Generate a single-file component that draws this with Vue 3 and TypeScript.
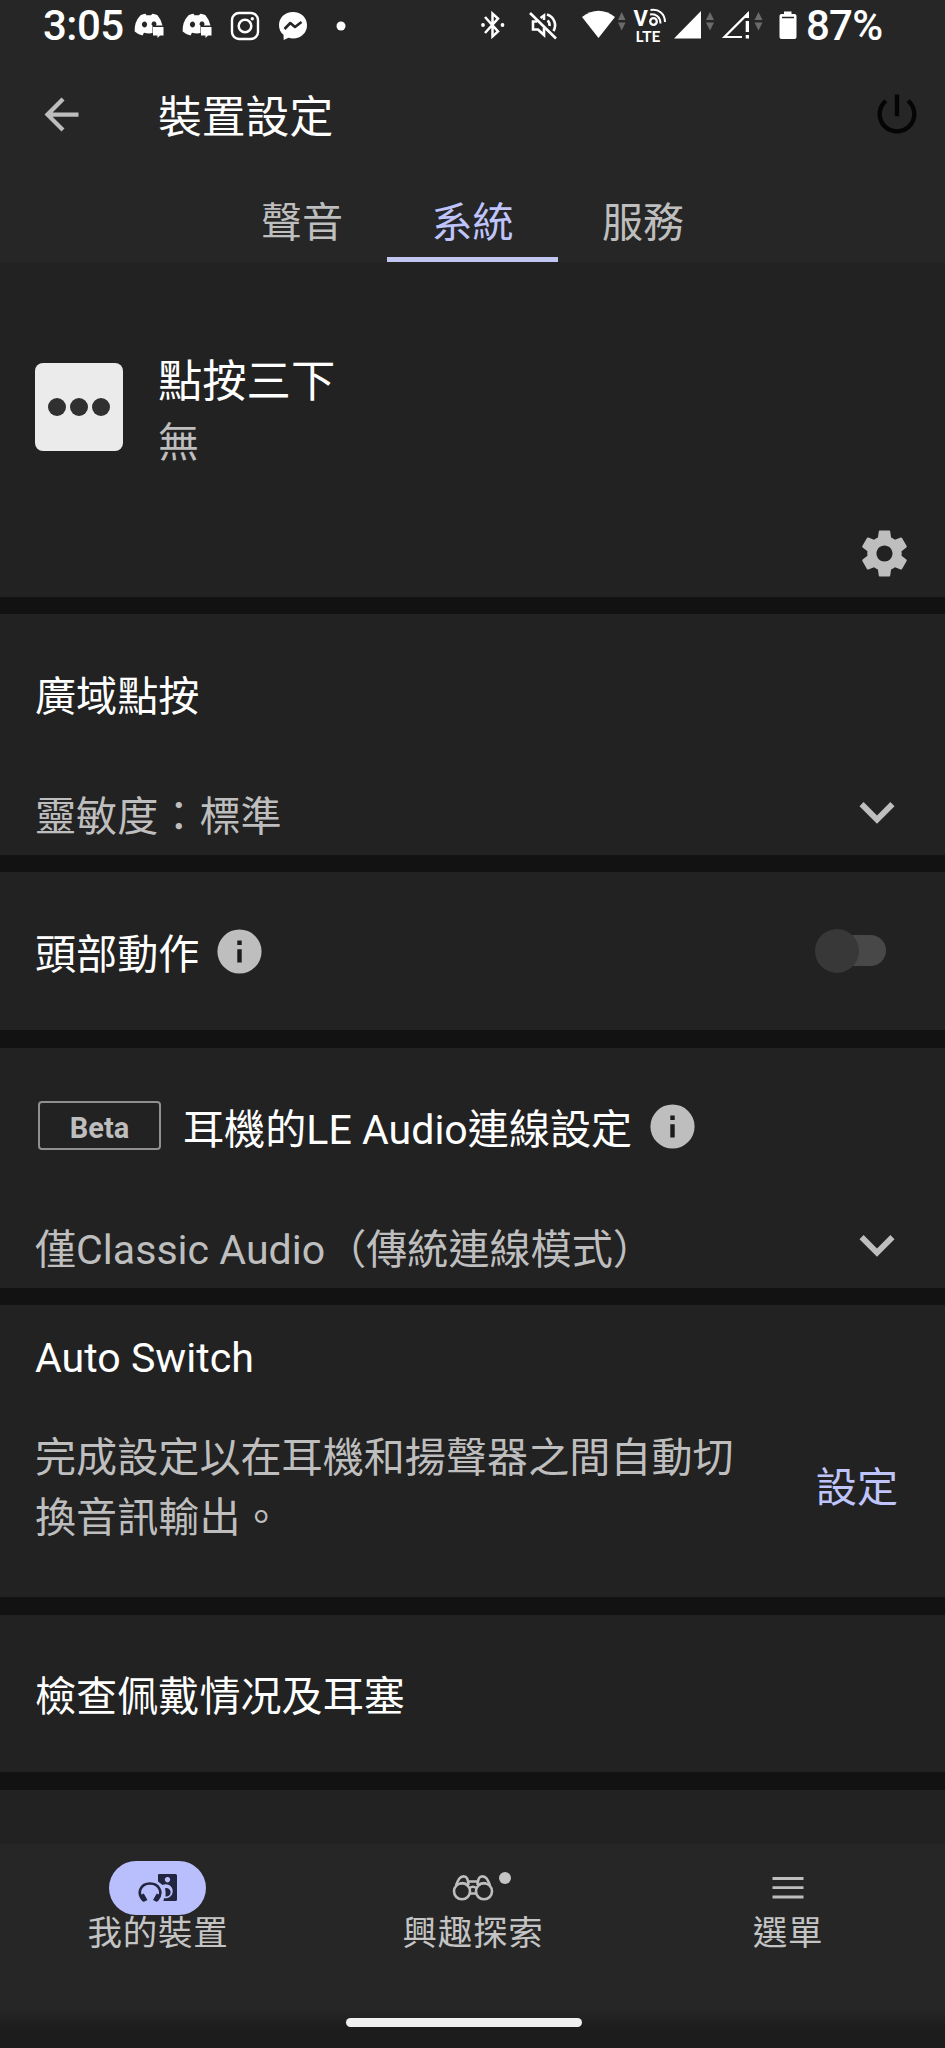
<script setup lang="ts">
import { ref } from 'vue'

interface Tab {
  id: string
  label: string
}

const tabs: Tab[] = [
  { id: 'sound', label: '聲音' },
  { id: 'system', label: '系統' },
  { id: 'service', label: '服務' },
]
const activeTab = ref<string>('system')
const headGesture = ref<boolean>(false)
</script>

<template>
  <div class="screen">
    <header class="top">
      <div class="status">
        <span class="clock">3:05</span>
        <div class="notifs">
          <svg v-for="n in 2" :key="n" width="30" height="26" viewBox="0 0 30 26">
            <path fill="#fff" fill-rule="evenodd" d="M6.500 2.200Q9 1 11.500.700L12.500 2.200H17L18.300.700Q21 1 23.500 2.200Q27.500 7 28.500 12.500H18.500V20Q15 21 10 19.800L8.500 22.500Q4 21.500.700 18.500Q0 9 6.500 2.200ZM10.500 8.500a2.600 3 0 1 0 .01 0ZM19.800 8.500a2.300 2.500 0 0 0-1.800 4H22a2.300 2.500 0 0 0-2.200-4Z" />
            <path fill="#fff" d="M19 14H29.500V22.500H26L23.500 25V22.500H19Z" />
          </svg>
          <svg width="30" height="30" viewBox="0 0 30 30" fill="none" stroke="#fff">
            <rect x="2" y="2" width="26" height="26" rx="7" stroke-width="2.400" />
            <circle cx="15" cy="15" r="6.300" stroke-width="2.500" />
            <circle cx="22.300" cy="7.700" r="1.700" fill="#fff" stroke="none" />
          </svg>
          <svg width="30" height="30" viewBox="0 0 30 30">
            <path fill="#fff" d="M15 1C6.800 1 1 6.800 1 14.200c0 4 1.700 7.300 4.500 9.600L5.700 29l4.800-2.200c1.400.4 2.900.6 4.500.6 8.200 0 14-5.800 14-13.200S23.200 1 15 1Z" />
            <path fill="none" stroke="#262626" stroke-width="2.600" stroke-linejoin="round" d="M6.500 18 12.300 12 17 16 23.500 11" />
          </svg>
          <svg width="10" height="10" viewBox="0 0 10 10"><circle cx="5" cy="5" r="4.500" fill="#fff" /></svg>
        </div>
        <div class="system-icons">
          <svg class="bt" width="26" height="36" viewBox="480 8 26 36">
            <path d="M485 17 498 31.500 492.500 36.500V13.500L498 18.500 485 33" fill="none" stroke="#fff" stroke-width="2.500" />
            <circle cx="483" cy="25" r="1.900" fill="#fff" /><circle cx="502.500" cy="25" r="1.900" fill="#fff" />
          </svg>
          <svg class="mute" width="30" height="36" viewBox="528 8 30 36" fill="none" stroke="#fff" stroke-width="2.600">
            <path d="M530 13 556 38.500" />
            <path d="M537 21.500H533V29.500H538L544 35V28M540.500 18 544 15.500V20" />
            <path d="M547 14.500C554.500 17 557 25 553.500 31M547.500 20.500Q550 22.500 549.500 26" />
          </svg>
          <svg class="wifi" width="44" height="36" viewBox="582 8 44 36">
            <path fill="#fff" d="M582 17Q598.500 4.500 615 17L598.500 38Z" />
            <path fill="#6b6b6b" d="M618 20 621.700 12 625.500 20ZM618 22.500H625.500L621.700 30.500Z" />
          </svg>
          <svg class="volte" width="34" height="36" viewBox="633 8 34 36">
            <text x="633.500" y="25.500" class="vo">V</text>
            <circle cx="653.500" cy="21.500" r="3.300" fill="none" stroke="#fff" stroke-width="2.300" />
            <path d="M650 14.500C656 13.500 660.500 17 660.500 23.500M650.500 10C659 8.500 665 14 665 22" fill="none" stroke="#fff" stroke-width="2" />
            <text x="635.500" y="41.500" class="lte">LTE</text>
          </svg>
          <svg class="sig" width="41" height="36" viewBox="674 8 41 36">
            <path fill="#fff" d="M674 38.500 701 11V38.500Z" />
            <path fill="#6b6b6b" d="M706 20 710 12 714 20ZM706 22.500H714L710 30.500Z" />
          </svg>
          <svg class="sig2" width="43" height="36" viewBox="720 8 43 36">
            <path fill="none" stroke="#fff" stroke-width="2.200" d="M742 37H724.500L747.500 14V18" />
            <path fill="#fff" d="M743 18 749 11V18ZM745.700 21H749V32H745.700ZM745.700 35H749V38.500H745.700Z" />
            <path fill="#6b6b6b" d="M754.500 20 758.500 12 762.500 20ZM754.500 22.500H762.500L758.500 30.500Z" />
          </svg>
          <svg class="batt" width="18" height="36" viewBox="779 8 18 36">
            <path fill="#fff" d="M784 14V11.500H791.500V14H794.500Q796.500 14 796.500 16V37Q796.500 39 794.500 39H781.500Q779.500 39 779.500 37V16Q779.500 14 781.500 14Z" />
            <path d="M782 17.500H794" stroke="#262626" stroke-width="1.500" />
          </svg>
        </div>
        <span class="percent">87%</span>
      </div>

      <div class="toolbar">
        <svg class="back" width="51" height="51" viewBox="0 0 24 24"><path fill="#bdbdbd" d="M20 11H7.830l5.590-5.590L12 4l-8 8 8 8 1.410-1.410L7.830 13H20v-2z" /></svg>
        <h1>裝置設定</h1>
        <svg class="power" width="52" height="52" viewBox="0 0 24 24"><path fill="#050505" d="M13 3h-2v10h2V3zm4.830 2.170l-1.420 1.420C17.990 7.860 19 9.810 19 12c0 3.870-3.130 7-7 7s-7-3.130-7-7c0-2.190 1.010-4.140 2.580-5.420L6.170 5.170C4.230 6.820 3 9.260 3 12c0 4.970 4.030 9 9 9s9-4.030 9-9c0-2.740-1.230-5.180-3.170-6.830z" /></svg>
      </div>

      <nav class="tabs">
        <button v-for="tab in tabs" :key="tab.id" :class="['tab', { active: tab.id === activeTab }]" @click="activeTab = tab.id">{{ tab.label }}</button>
      </nav>
    </header>

    <main class="list">
      <section class="tap">
        <div class="tap-row">
          <div class="tile"><i></i><i></i><i></i></div>
          <div>
            <div class="big">點按三下</div>
            <div class="line muted">無</div>
          </div>
        </div>
        <svg class="gear" width="55" height="55" viewBox="0 0 24 24"><path fill="#bebebe" d="M19.430 12.980c.04-.32.070-.64.070-.98s-.03-.66-.07-.98l2.110-1.650c.19-.15.24-.42.12-.64l-2-3.460c-.12-.22-.39-.3-.61-.22l-2.490 1c-.52-.4-1.080-.73-1.690-.98l-.38-2.650C14.460 2.180 14.250 2 14 2h-4c-.25 0-.46.18-.49.42l-.38 2.650c-.61.25-1.170.59-1.690.98l-2.490-1c-.23-.09-.49 0-.61.22l-2 3.460c-.13.22-.07.49.12.64l2.110 1.650c-.04.32-.07.65-.07.98s.03.66.07.98l-2.110 1.650c-.19.15-.24.42-.12.64l2 3.460c.12.22.39.3.61.22l2.490-1c.52.4 1.080.73 1.690.98l.38 2.650c.03.24.24.42.49.42h4c.25 0 .46-.18.49-.42l.38-2.650c.61-.25 1.170-.59 1.690-.98l2.490 1c.23.09.49 0 .61-.22l2-3.460c.12-.22.07-.49-.12-.64l-2.110-1.650zM12 15.500c-1.930 0-3.500-1.570-3.500-3.500s1.570-3.500 3.500-3.500 3.500 1.570 3.500 3.500-1.570 3.500-3.500 3.500z" /></svg>
      </section>

      <section class="expand">
        <div class="line">廣域點按</div>
        <div class="value-row">
          <span class="line muted">靈敏度：標準</span>
          <svg class="chevron" width="70" height="70" viewBox="0 0 24 24"><path fill="#bebebe" d="M16.590 8.590 12 13.170 7.410 8.590 6 10l6 6 6-6z" /></svg>
        </div>
      </section>

      <section class="switch-row">
        <span class="line">頭部動作</span>
        <svg class="info" width="53" height="53" viewBox="0 0 24 24"><circle cx="12" cy="12" r="10" fill="#bebebe" /><path fill="#1c1c1c" d="M11 7h2v2h-2zM11 11h2v6h-2z" /></svg>
        <button :class="['toggle', { on: headGesture }]" aria-label="頭部動作" @click="headGesture = !headGesture"><span class="track"></span><span class="thumb"></span></button>
      </section>

      <section class="expand">
        <div class="beta-row">
          <span class="beta">Beta</span>
          <span class="line">耳機的LE Audio連線設定</span>
          <svg class="info" width="53" height="53" viewBox="0 0 24 24"><circle cx="12" cy="12" r="10" fill="#bebebe" /><path fill="#1c1c1c" d="M11 7h2v2h-2zM11 11h2v6h-2z" /></svg>
        </div>
        <div class="value-row">
          <span class="line muted">僅Classic Audio（傳統連線模式）</span>
          <svg class="chevron" width="70" height="70" viewBox="0 0 24 24"><path fill="#bebebe" d="M16.590 8.590 12 13.170 7.410 8.590 6 10l6 6 6-6z" /></svg>
        </div>
      </section>

      <section class="auto">
        <div class="line">Auto Switch</div>
        <div class="auto-row">
          <p class="line muted">完成設定以在耳機和揚聲器之間自動切換音訊輸出。</p>
          <button class="link">設定</button>
        </div>
      </section>

      <section class="check"><div class="line">檢查佩戴情况及耳塞</div></section>
      <section class="rest"></section>
    </main>

    <footer class="bottom">
      <div class="dest">
        <div class="icon pill">
          <svg width="40" height="30" viewBox="0 0 40 30">
            <path fill="#22253f" fill-rule="evenodd" d="M21 1H37.500Q39 1 39 2.500V26.500Q39 28 37.500 28H25.500L26 25A7 7 0 1 0 24.500 12L20 8.500V2Q20 1 21 1ZM29.500 4a2.700 2.700 0 1 0 .01 0Z" />
            <path fill="#22253f" d="M27 15.200a4.300 4.300 0 1 1 .5 8.300Q28 19 27 15.200Z" />
            <path fill="none" stroke="#22253f" stroke-width="2.600" d="M5.500 27.500C-2 19.500 3 10.500 12 10.500S26 19.500 19 27.500" />
            <path fill="none" stroke="#22253f" stroke-width="4.500" d="M3.800 21.500 7.500 28M20.700 21.500 17 28" />
          </svg>
        </div>
        <span>我的裝置</span>
      </div>
      <div class="dest">
        <div class="icon">
          <svg width="42" height="28" viewBox="0 0 42 28" fill="none" stroke="#bebebe" stroke-width="2.600">
            <circle cx="10" cy="17.300" r="8" /><circle cx="32" cy="17.300" r="8" />
            <path d="M4 11.500C6.500 5 8 2.400 11.500 2.400S16 4.500 16.500 11M38 11.500C35.500 5 34 2.400 30.500 2.400S26 4.500 25.500 11M8 9.500Q12 8 16 11.500M34 9.500Q30 8 26 11.500M16.500 7.500H25.500M17.500 14Q21 11.500 24.500 14M18 19.500H24" />
          </svg>
          <b class="badge"></b>
        </div>
        <span>興趣探索</span>
      </div>
      <div class="dest">
        <div class="icon">
          <svg width="32" height="24" viewBox="0 0 32 24"><path d="M.5 2.500H31.500M.5 11.700H31.500M.5 21H31.500" stroke="#bebebe" stroke-width="2.800" /></svg>
        </div>
        <span>選單</span>
      </div>
      <div class="home"></div>
    </footer>
  </div>
</template>

<style>
body {
  background: #222;
}
</style>

<style scoped>
.screen {
  width: 945px;
  height: 2048px;
  overflow: hidden;
  display: flex;
  flex-direction: column;
  background: #121212;
  color: #fff;
  font-family: Roboto, "Noto Sans CJK TC", sans-serif;
  font-size: 41.100px;
}
svg {
  display: block;
  flex: none;
}
button {
  border: 0;
  padding: 0;
  background: none;
  font: inherit;
  color: inherit;
}
.top {
  height: 262px;
  background: #262626;
}
.status {
  height: 52px;
  display: flex;
  align-items: flex-start;
}
.clock,
.percent {
  font-size: 42px;
  font-weight: 500;
  line-height: 51px;
}
.clock {
  box-sizing: border-box;
  width: 125px;
  padding-left: 43px;
  letter-spacing: -0.5px;
}
.percent {
  margin-left: 9px;
  letter-spacing: -0.800px;
}
.notifs {
  display: grid;
  grid-template-columns: repeat(5, 48px);
  place-items: center;
  height: 52px;
}
.system-icons {
  display: flex;
  margin: 8px 0 0 115px;
}
.mute { margin-left: 22px; }
.wifi { margin-left: 24px; }
.volte {
  margin-left: 7px;
  overflow: visible;
}
.sig { margin-left: 7px; }
.sig2 { margin-left: 5px; }
.batt { margin-left: 16px; }
.vo {
  font-size: 22px;
  font-weight: 700;
  fill: #fff;
}
.lte {
  font: 700 15.500px Lato, sans-serif;
  fill: #fff;
}
.toolbar {
  height: 124px;
  display: flex;
  align-items: center;
  padding: 0 22px 0 36px;
}
h1 {
  margin: 7px auto 0 71px;
  font-size: 43.800px;
  font-weight: 400;
  line-height: 60px;
}
.tabs {
  height: 86px;
  display: flex;
  justify-content: center;
}
.tab {
  width: 170.500px;
  box-sizing: border-box;
  padding-top: 5px;
  border-bottom: 5px solid transparent;
  color: #bebebe;
}
.tab.active {
  color: #bfc4fb;
  border-color: #c0c5f2;
}
.list {
  height: 1582px;
  display: flex;
  flex-direction: column;
}
section {
  background: #222;
  box-sizing: border-box;
  flex: none;
}
.line {
  line-height: 60px;
  margin: 0;
}
.muted {
  color: #bebebe;
}
.tap {
  height: 335px;
  padding: 89px 33px 0 35px;
  margin-bottom: 17px;
}
.tap-row {
  display: flex;
  gap: 35px;
}
.tile {
  width: 88px;
  height: 88px;
  margin-top: 12px;
  border-radius: 8px;
  background: #ebebeb;
  display: flex;
  align-items: center;
  justify-content: center;
  gap: 4px;
}
.tile i {
  width: 18px;
  height: 18px;
  border-radius: 50%;
  background: #303030;
}
.big {
  font-size: 44.300px;
  line-height: 62px;
}
.gear {
  margin: 53px 0 0 auto;
}
.expand {
  height: 241px;
  padding: 53px 33px 0 35px;
  margin-bottom: 17px;
}
.value-row {
  margin-top: 60px;
  height: 60px;
  display: flex;
  justify-content: space-between;
}
.chevron {
  margin-top: -10px;
}
.switch-row {
  height: 158px;
  padding: 0 59px 0 35px;
  margin-bottom: 18px;
  display: flex;
  align-items: center;
}
.switch-row .line {
  margin-top: 8px;
}
.info {
  margin-left: 14px;
}
.toggle {
  position: relative;
  width: 71px;
  height: 44px;
  margin-left: auto;
}
.track {
  position: absolute;
  inset: 6px 0 7px 8px;
  border-radius: 16px;
  background: #484848;
}
.thumb {
  position: absolute;
  left: 0;
  top: 0;
  width: 44px;
  height: 44px;
  border-radius: 50%;
  background: #383838;
}
.toggle.on .thumb {
  left: 27px;
}
.switch-row + .expand {
  height: 240px;
  padding-top: 52px;
}
.beta-row {
  height: 60px;
  display: flex;
}
.beta {
  box-sizing: border-box;
  width: 123px;
  height: 49px;
  margin: 1px 22px 0 3px;
  border: 2px solid #909090;
  border-radius: 4px;
  color: #bebebe;
  font-size: 29px;
  font-weight: 700;
  line-height: 51px;
  text-align: center;
}
.auto {
  height: 292px;
  padding: 23px 47px 0 35px;
  margin-bottom: 18px;
}
.auto-row {
  margin-top: 40px;
  display: flex;
  align-items: center;
  justify-content: space-between;
}
.auto-row p {
  width: 710px;
}
.link {
  color: #bfc4fb;
  line-height: 60px;
}
.check {
  height: 157px;
  padding: 52px 35px 0;
  margin-bottom: 18px;
}
.rest {
  height: 54px;
}
.bottom {
  height: 204px;
  background: linear-gradient(#262626 0, #262626 165px, #1c1c1c 185px, #1c1c1c);
  display: grid;
  grid-template-columns: repeat(3, 315px);
  grid-template-rows: 174px 9px;
}
.dest {
  display: flex;
  flex-direction: column;
  align-items: center;
  padding-top: 17px;
  color: #c4c4c4;
  font-size: 34.500px;
  letter-spacing: 0.800px;
}
.dest span {
  line-height: 36px;
  padding-left: 1px;
}
.icon {
  position: relative;
  width: 97px;
  height: 54px;
  display: flex;
  align-items: center;
  justify-content: center;
}
.pill {
  background: #b9bffc;
  border-radius: 27px;
}
.badge {
  position: absolute;
  left: 75px;
  top: 11px;
  width: 12px;
  height: 12px;
  border-radius: 50%;
  background: #c4c4c4;
}
.home {
  grid-column: 2;
  margin-left: 31px;
  width: 236px;
  height: 9px;
  border-radius: 5px;
  background: #efefef;
}
</style>
